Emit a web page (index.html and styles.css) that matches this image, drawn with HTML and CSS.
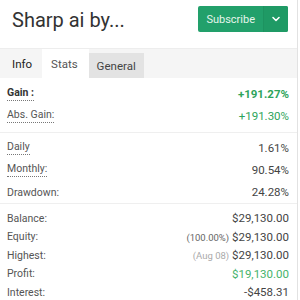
FILE: index.html
```html
<!DOCTYPE html>
<html>
<head>
    <title>Sharp ai by...</title>
    <meta charset="utf-8" />
    <meta name="viewport" content="width=device-width, initial-scale=1.0">
    <link rel="stylesheet" href="styles.css">
</head>
<body>
    <div class="page">
        <div class="header">
            <div class="title">Sharp ai by...</div>
            <div class="subscribe">
                <span class="subscribe-label">Subscribe</span>
                <span class="subscribe-caret">
                    <svg width="10" height="10" viewBox="0 0 10 10"><path d="M2 3.5 L5 6.5 L8 3.5" fill="none" stroke="#fff" stroke-width="1.6" stroke-linecap="round" stroke-linejoin="round"/></svg>
                </span>
            </div>
        </div>
        <div class="tabs">
            <div class="tab tab-info">Info</div>
            <div class="tab tab-active">Stats</div>
            <div class="tab tab-hover">General</div>
        </div>

        <div class="section section-first">
            <div class="row row-tall"><span class="label dotted bold">Gain :</span><span class="value green bold">+191.27%</span></div>
            <div class="row row-tall"><span class="label dotted">Abs. Gain:</span><span class="value green">+191.30%</span></div>
        </div>
        <div class="section section-second">
            <div class="row row-tall"><span class="label dotted">Daily</span><span class="value">1.61%</span></div>
            <div class="row row-tall"><span class="label dotted">Monthly:</span><span class="value">90.54%</span></div>
            <div class="row row-tall"><span class="label">Drawdown:</span><span class="value">24.28%</span></div>
        </div>
        <div class="section section-last">
            <div class="row"><span class="label">Balance:</span><span class="value">$29,130.00</span></div>
            <div class="row"><span class="label">Equity:</span><span class="value"><span class="note">(100.00%)</span> $29,130.00</span></div>
            <div class="row"><span class="label">Highest:</span><span class="value"><span class="note light">(Aug 08)</span> $29,130.00</span></div>
            <div class="row"><span class="label">Profit:</span><span class="value green-light">$19,130.00</span></div>
            <div class="row"><span class="label">Interest:</span><span class="value">-$458.31</span></div>
        </div>
    </div>
</body>
</html>
```

FILE: styles.css
```css
body {
    margin: 0;
    background: #fff;
    font-family: Roboto, "Liberation Sans", sans-serif;
    color: #444;
}

.page {
    width: 297px;
    height: 300px;
    border-right: 1px solid #e2e2e2;
    overflow: hidden;
}

.header {
    display: flex;
    align-items: center;
    justify-content: space-between;
    height: 38px;
    padding: 0 9px 0 12px;
}

.title {
    font-size: 20px;
    color: #333;
    margin-top: 1px;
}

.subscribe {
    display: flex;
    height: 26px;
    background: #22a06b;
    border-radius: 2px;
    overflow: hidden;
}

.subscribe-label {
    display: flex;
    align-items: center;
    padding: 0 8px 0 8px;
    font-size: 11px;
    color: #e6f5ec;
    border-right: 1px solid #1d9360;
}

.subscribe-caret {
    display: flex;
    align-items: center;
    justify-content: center;
    width: 24px;
    background: #1f9a65;
}

.tabs {
    display: flex;
    box-sizing: border-box;
    margin-top: 10px;
    height: 30px;
    background: #f5f5f5;
    border-top: 1px solid #ededed;
    padding-left: 2px;
}

.tab {
    display: flex;
    align-items: center;
    padding: 1px 8px 0 8px;
    font-size: 11.5px;
    color: #444;
}

.tab-info {
    padding: 1px 10px 0 10px;
    color: #222;
}

.tab-active {
    background: #fff;
    color: #555;
    padding: 1px 11px 0 9px;
}

.tab-hover {
    background: #e3e3e3;
    margin-top: 4px;
    padding-top: 0;
}

.section {
    border-bottom: 1px solid #efefef;
    padding: 0 8px 0 7px;
}

.section-first {
    padding-top: 5px;
    padding-bottom: 5px;
}

.section-second {
    padding-top: 4px;
}

.section-last {
    border-bottom: none;
    padding-top: 5px;
}

.row {
    display: flex;
    justify-content: space-between;
    align-items: center;
    height: 18.5px;
    font-size: 11.5px;
}

.row-tall {
    height: 22px;
}

.label {
    color: #555;
    font-size: 10.5px;
}

.dotted {
    border-bottom: 1px dotted #777;
    line-height: 12px;
    padding-bottom: 1px;
}

.bold {
    font-weight: bold;
    color: #333;
}

.value {
    color: #444;
}

.green {
    color: #2ea45b;
}

.green-light {
    color: #45b36b;
}

.note {
    font-size: 9.5px;
    color: #666;
}

.light {
    color: #aaa;
}
```
